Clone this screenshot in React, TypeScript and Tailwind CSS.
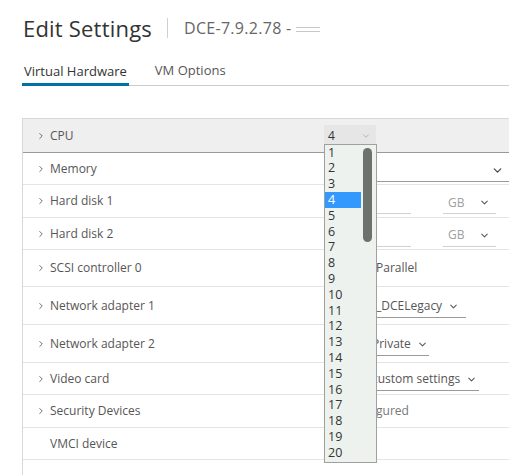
import { ChevronDown, ChevronRight } from "lucide-react";

const font = "font-['Open_Sans',_'Liberation_Sans',_sans-serif]";

// rows of the hardware grid, value column is mostly hidden behind the open CPU list
const rows: { label: string; h: string; expand: boolean; bg?: string }[] = [
  { label: "CPU", h: "h-[34px]", expand: true, bg: "bg-[#efefef] border-b-[#9a9a9a]" },
  { label: "Memory", h: "h-[32px]", expand: true },
  { label: "Hard disk 1", h: "h-[33px]", expand: true },
  { label: "Hard disk 2", h: "h-[32px]", expand: true },
  { label: "SCSI controller 0", h: "h-[37px]", expand: true },
  { label: "Network adapter 1", h: "h-[38px]", expand: true },
  { label: "Network adapter 2", h: "h-[38px]", expand: true },
  { label: "Video card", h: "h-[32px]", expand: true },
  { label: "Security Devices", h: "h-[33px]", expand: true },
  { label: "VMCI device", h: "h-[32px]", expand: false },
  { label: "", h: "h-[40px]", expand: false },
];

function DiskValue() {
  return (
    <div className="flex items-center h-full">
      <div className="w-[87px] h-[22px] border-b border-[#d0d0d0] mt-[4px]" />
      <div className="ml-[32px] w-[53px] h-[22px] border-b border-[#d0d0d0] mt-[4px] flex items-center justify-between pl-[5px] pr-[6px]">
        <span className="text-[12px] text-[#a0a0a0]">GB</span>
        <ChevronDown className="w-[11px] h-[11px] text-[#555]" strokeWidth={2.2} />
      </div>
    </div>
  );
}

function SelectValue({ text, width, pad }: { text: string; width: string; pad: string }) {
  return (
    <div className="flex items-center h-full">
      <div className={`${width} ${pad} h-[22px] border-b border-[#9a9a9a] flex items-center gap-[6px] mt-[2px]`}>
        <span className="text-[12px] text-[#565656]">{text}</span>
        <ChevronDown className="w-[11px] h-[11px] text-[#555]" strokeWidth={2.2} />
      </div>
    </div>
  );
}

function valueFor(i: number) {
  switch (i) {
    case 0:
      return (
        <div className="flex items-center h-full">
          <div className="w-[52px] h-[22px] bg-[#e6e6e6] flex items-center justify-between pl-[4px] pr-[5px]">
            <span className="text-[12px] text-[#333]">4</span>
            <ChevronDown className="w-[10px] h-[10px] text-[#aaa]" strokeWidth={2} />
          </div>
        </div>
      );
    case 1:
      return (
        <div className="flex items-center h-full">
          <div className="w-[185px] h-[22px] border-b border-[#9a9a9a] flex items-center justify-end pr-[5px] mt-[4px]">
            <ChevronDown className="w-[13px] h-[13px] text-[#444]" strokeWidth={2.2} />
          </div>
        </div>
      );
    case 2:
    case 3:
      return <DiskValue />;
    case 4:
      return (
        <div className="flex items-center h-full pl-[52px]">
          <span className="text-[12px] text-[#565656]">Parallel</span>
        </div>
      );
    case 5:
      return <SelectValue text="_DCELegacy" width="w-[142px]" pad="pl-[52px]" />;
    case 6:
      return <SelectValue text="Private" width="w-[105px]" pad="pl-[48px]" />;
    case 7:
      return <SelectValue text="custom settings" width="w-[155px]" pad="pl-[48px]" />;
    case 8:
      return (
        <div className="flex items-center h-full pl-[52px]">
          <span className="text-[12px] text-[#777]">gured</span>
        </div>
      );
    default:
      return null;
  }
}

export default function App() {
  const counts = Array.from({ length: 20 }, (_, i) => i + 1);

  return (
    <div className={`w-[509px] h-[475px] overflow-hidden bg-white relative ${font}`}>
      {/* Title */}
      <div className="flex items-center pl-[23px] pt-[12px] h-[44px]">
        <h1 className="text-[22px] font-normal tracking-[0.2px] text-[#333] leading-none">Edit Settings</h1>
        <div className="w-px h-[20px] bg-[#cfcfcf] ml-[15px] mr-[16px]" />
        <span className="text-[16px] text-[#666] leading-none tracking-[0.3px]">DCE-7.9.2.78 -</span>
        <span className="ml-[4px] w-[24px] h-[5px] border-t border-b border-[#c8c8c8] mt-[3px]" />
      </div>

      {/* Tabs */}
      <div className="mt-[15px] ml-[22px] flex items-end border-b border-[#cccccc] h-[27px]">
        <div className="px-[2px] h-full flex items-center border-b-[3px] border-[#0072a3] -mb-px">
          <span className="text-[13px] text-[#333]">Virtual Hardware</span>
        </div>
        <div className="ml-[26px] h-full flex items-center pb-[3px]">
          <span className="text-[13px] text-[#565656]">VM Options</span>
        </div>
      </div>

      {/* Hardware grid */}
      <div className="mt-[32px] ml-[22px] border-l border-t border-[#d8d8d8]">
        {rows.map((r, i) => (
          <div key={i} className={`flex ${r.h} border-b border-[#e4e4e4] ${r.bg ?? ""}`}>
            <div className="w-[301px] flex items-center pl-[13px]">
              {r.expand ? (
                <ChevronRight className="w-[10px] h-[10px] text-[#555]" strokeWidth={2} />
              ) : (
                <span className="w-[10px]" />
              )}
              <span className="ml-[4px] text-[12px] text-[#565656]">{r.label}</span>
            </div>
            <div className="flex-1">{valueFor(i)}</div>
          </div>
        ))}
      </div>

      {/* open CPU count list */}
      <div className="absolute left-[324px] top-[144px] w-[53px] h-[319px] bg-[#eef2ee] border border-[#a0a0a0] flex">
        <ul className="w-[36px]">
          {counts.map((n) => (
            <li
              key={n}
              className={`h-[15.8px] pl-[3px] flex items-center text-[12.5px] leading-none ${
                n === 4 ? "bg-[#3399ff] text-white" : "text-[#333]"
              }`}
            >
              {n}
            </li>
          ))}
        </ul>
        <div className="flex-1 pt-[3px] pl-[2px]">
          <div className="w-[9px] h-[94px] rounded-full bg-[#6d726d]" />
        </div>
      </div>
    </div>
  );
}
